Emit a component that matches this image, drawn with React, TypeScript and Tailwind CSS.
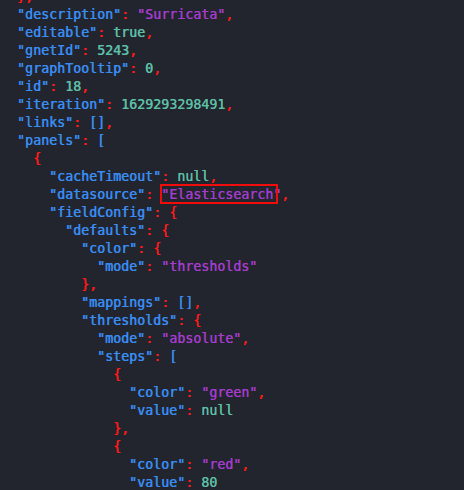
import React from "react";

type Tok = [string, string];
const K = "text-[#3a8cf0]";
const S = "text-[#a43ccc]";
const L = "text-[#5ebfa6]";
const P = "text-[#ff1a1a]";
const B = "text-[#3a8cf0]";

const key = (k: string): Tok[] => [[`"${k}"`, K], [": ", P]];
const str = (v: string): Tok => [`"${v}"`, S];
const lit = (v: string): Tok => [v, L];
const c: Tok = [",", P];

const lines: { i: number; t: Tok[]; mark?: boolean }[] = [
  { i: 1, t: [["}", P], c] },
  { i: 1, t: [...key("description"), str("Surricata"), c] },
  { i: 1, t: [...key("editable"), lit("true"), c] },
  { i: 1, t: [...key("gnetId"), lit("5243"), c] },
  { i: 1, t: [...key("graphTooltip"), lit("0"), c] },
  { i: 1, t: [...key("id"), lit("18"), c] },
  { i: 1, t: [...key("iteration"), lit("1629293298491"), c] },
  { i: 1, t: [...key("links"), ["[]", B], c] },
  { i: 1, t: [...key("panels"), ["[", B]] },
  { i: 2, t: [["{", P]] },
  { i: 3, t: [...key("cacheTimeout"), lit("null"), c] },
  { i: 3, t: [...key("datasource"), str("Elasticsearch"), c], mark: true },
  { i: 3, t: [...key("fieldConfig"), ["{", P]] },
  { i: 4, t: [...key("defaults"), ["{", P]] },
  { i: 5, t: [...key("color"), ["{", P]] },
  { i: 6, t: [...key("mode"), str("thresholds")] },
  { i: 5, t: [["}", P], c] },
  { i: 5, t: [...key("mappings"), ["[]", B], c] },
  { i: 5, t: [...key("thresholds"), ["{", P]] },
  { i: 6, t: [...key("mode"), str("absolute"), c] },
  { i: 6, t: [...key("steps"), ["[", B]] },
  { i: 7, t: [["{", P]] },
  { i: 8, t: [...key("color"), str("green"), c] },
  { i: 8, t: [...key("value"), lit("null")] },
  { i: 7, t: [["}", P], c] },
  { i: 7, t: [["{", P]] },
  { i: 8, t: [...key("color"), str("red"), c] },
  { i: 8, t: [...key("value"), lit("80")] },
];

export default function App() {
  return (
    <div
      className="w-[464px] h-[490px] overflow-hidden bg-[#22252d] text-[13.3px] leading-[18px] [text-shadow:0.35px_0_0_currentColor]"
      style={{ fontFamily: '"DejaVu Sans Mono", monospace' }}
    >
      <div className="-mt-[12px] pl-[1px] relative">
        {lines.map((ln, idx) => (
          <div key={idx} className="whitespace-pre h-[18px] relative">
            {"  ".repeat(ln.i)}
            {ln.t.map(([s, cl], j) => (
              <span key={j} className={cl}>
                {s}
              </span>
            ))}
            {ln.mark && (
              <div className="absolute left-[159px] top-[-2px] w-[118px] h-[20px] border-2 border-[#f20d0d]" />
            )}
          </div>
        ))}
      </div>
    </div>
  );
}
